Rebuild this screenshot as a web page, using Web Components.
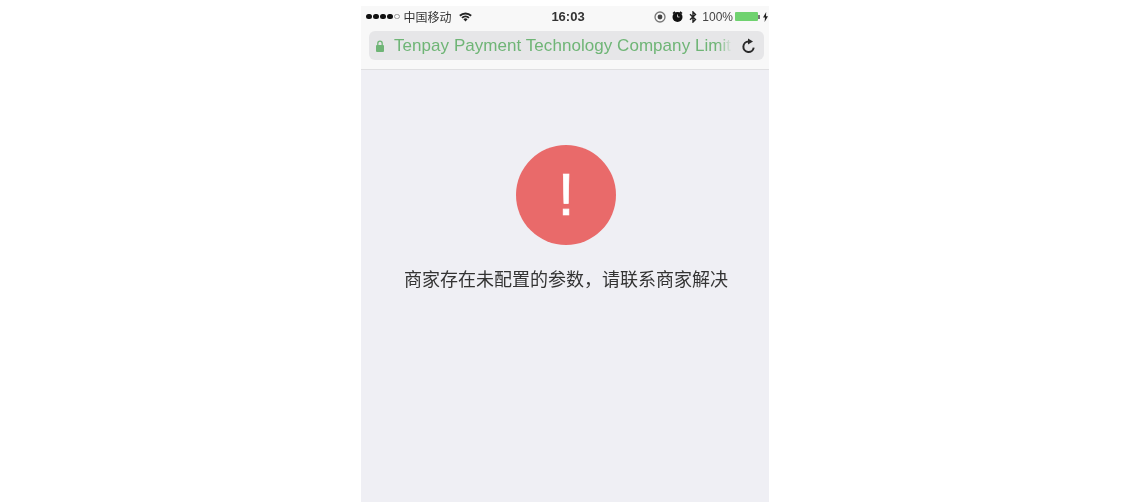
<!DOCTYPE html>
<html lang="zh">
<head>
<meta charset="utf-8">
<style>
  html, body { margin: 0; height: 100%; background: #fff; }
  body { display: flex; justify-content: center; overflow: hidden; font-family: "Liberation Sans", "Noto Sans CJK SC", sans-serif; }
</style>
</head>
<body>
<phone-frame>
  <status-bar slot="top"></status-bar>
  <url-bar slot="top" label="Tenpay Payment Technology Company Limit"></url-bar>
  <error-message text="商家存在未配置的参数，请联系商家解决"></error-message>
</phone-frame>
<script>
const templatePhone = document.createElement("template");
templatePhone.innerHTML = `
  <style>
    :host { display: flex; flex-direction: column; width: 408px; height: 496px; margin-top: 6px; margin-right: 4px; background: #efeff4; }
    header { display: flex; flex-direction: column; height: 64px; box-sizing: border-box; background: #f8f8f8; border-bottom: 1px solid #dfdfe1; }
    main { flex: 1; display: flex; flex-direction: column; }
  </style>
  <header><slot name="top"></slot></header>
  <main><slot></slot></main>
`;
class PhoneFrame extends HTMLElement {
  constructor() {
    super();
    this.attachShadow({ mode: "open" });
    this.shadowRoot.appendChild(templatePhone.content.cloneNode(true));
  }
}
customElements.define("phone-frame", PhoneFrame);

const templateStatus = document.createElement("template");
templateStatus.innerHTML = `
  <style>
    :host { display: grid; grid-template-columns: 1fr auto 1fr; align-items: center; height: 21px; padding: 0 1px 0 5px; color: #2b2b2b; font-size: 12px; filter: blur(.4px); }
    .left, .right { display: flex; align-items: center; }
    .right { justify-content: flex-end; color: #444; }
    .dots { display: flex; gap: 1.5px; margin-right: 4px; }
    .dots i { width: 5.5px; height: 5.5px; border-radius: 50%; background: #111; box-sizing: border-box; }
    .dots i.off { background: none; border: 1px solid #999; }
    .carrier { color: #333; font-size: 12px; }
    .wifi { margin-left: 7px; }
    .time { font-weight: bold; font-size: 13px; color: #333; margin-left: 2px; }
    .pct { margin-left: 5px; font-size: 12px; }
    .battery { display: flex; align-items: center; margin-left: 2px; }
    .battery b { width: 23px; height: 9px; background: #6fd26f; border-radius: 1px; }
    .battery u { width: 2px; height: 4px; background: #777; }
    .icon { margin-left: 6px; display: block; }
  </style>
  <div class="left">
    <span class="dots"><i></i><i></i><i></i><i></i><i class="off"></i></span>
    <span class="carrier">中国移动</span>
    <svg class="wifi" width="13" height="10" viewBox="0 0 13 10"><path d="M.2 3a9 9 0 0 1 12.6 0l-1.3 1.5a7 7 0 0 0-10 0zM2.4 5.2a5.8 5.8 0 0 1 8.2 0L9.3 6.6a4 4 0 0 0-5.6 0zM4.4 7.2a3 3 0 0 1 4.2 0L6.5 9.6z" fill="#222"/></svg>
  </div>
  <span class="time">16:03</span>
  <div class="right">
    <svg class="icon" width="12" height="12" viewBox="0 0 12 12"><circle cx="6" cy="6" r="5" fill="none" stroke="#777" stroke-width="1.3"/><circle cx="6" cy="6" r="2.4" fill="#444"/></svg>
    <svg class="icon" width="11" height="11" viewBox="0 0 11 11"><circle cx="5.5" cy="6" r="5" fill="#111"/><path d="M1 2.5L3 .8M10 2.5L8 .8" stroke="#111" stroke-width="1.6"/><path d="M5.5 3.5V6H7.5" stroke="#bbb" fill="none"/></svg>
    <svg class="icon" width="8" height="12" viewBox="0 0 8 12"><path d="M1 3.2l5.5 5.2L4 11V1l2.5 2.6L1 8.8" fill="none" stroke="#222" stroke-width="1.4"/></svg>
    <span class="pct">100%</span>
    <span class="battery"><b></b><u></u></span>
    <svg class="icon" width="5" height="10" viewBox="0 0 5 10" style="margin-left:3px"><path d="M3.2 0L0 5.6h2L1.6 10 5 4.2H3z" fill="#222"/></svg>
  </div>
`;
class StatusBar extends HTMLElement {
  constructor() {
    super();
    this.attachShadow({ mode: "open" });
    this.shadowRoot.appendChild(templateStatus.content.cloneNode(true));
  }
}
customElements.define("status-bar", StatusBar);

const templateUrl = document.createElement("template");
templateUrl.innerHTML = `
  <style>
    :host { display: flex; align-items: center; height: 29px; margin: 4px 5px 0 8px; padding: 0 8px 0 6px; background: #e6e6e8; border-radius: 6px; }
    .lock { flex: none; margin-right: 9px; }
    .label { flex: none; width: 338px; white-space: nowrap; color: #6fb576; font-size: 17px; letter-spacing: .05px; filter: blur(.3px); -webkit-mask-image: linear-gradient(to right, #000 96%, transparent); mask-image: linear-gradient(to right, #000 96%, transparent); }
    .reload { flex: none; margin-left: auto; }
  </style>
  <svg class="lock" width="10" height="12" viewBox="0 0 10 12"><rect x="1" y="5" width="8" height="7" rx="1" fill="#6fb576"/><path d="M2.8 5.5V3.4a2.2 2.2 0 0 1 4.4 0v2.1" fill="none" stroke="#6fb576" stroke-width="1.3"/></svg>
  <span class="label"></span>
  <svg class="reload" width="15" height="16" viewBox="0 0 15 16"><path d="M7.6 3.6A5.2 5.2 0 1 0 12.7 9.6" fill="none" stroke="#2a2a2a" stroke-width="2"/><path d="M7 .4L12 3.5 7 6.6z" fill="#2a2a2a"/></svg>
`;
class UrlBar extends HTMLElement {
  constructor() {
    super();
    this.attachShadow({ mode: "open" });
    this.shadowRoot.appendChild(templateUrl.content.cloneNode(true));
    this.shadowRoot.querySelector(".label").textContent = this.getAttribute("label");
  }
}
customElements.define("url-bar", UrlBar);

const templateError = document.createElement("template");
templateError.innerHTML = `
  <style>
    :host { display: flex; flex-direction: column; align-items: center; padding: 75px 0 0 2px; }
    .circle { width: 100px; height: 100px; border-radius: 50%; background: #e96a6a; display: flex; align-items: center; justify-content: center; }
    .mark { color: #fff; font: 60px/1 "Liberation Sans", sans-serif; -webkit-text-stroke: .6px #fff; }
    p { margin: 25px 0 0; font-size: 18px; line-height: 20px; color: #333; white-space: nowrap; filter: blur(.3px); }
  </style>
  <div class="circle"><span class="mark">!</span></div>
  <p></p>
`;
class ErrorMessage extends HTMLElement {
  constructor() {
    super();
    this.attachShadow({ mode: "open" });
    this.shadowRoot.appendChild(templateError.content.cloneNode(true));
    this.shadowRoot.querySelector("p").textContent = this.getAttribute("text");
  }
}
customElements.define("error-message", ErrorMessage);
</script>
</body>
</html>
